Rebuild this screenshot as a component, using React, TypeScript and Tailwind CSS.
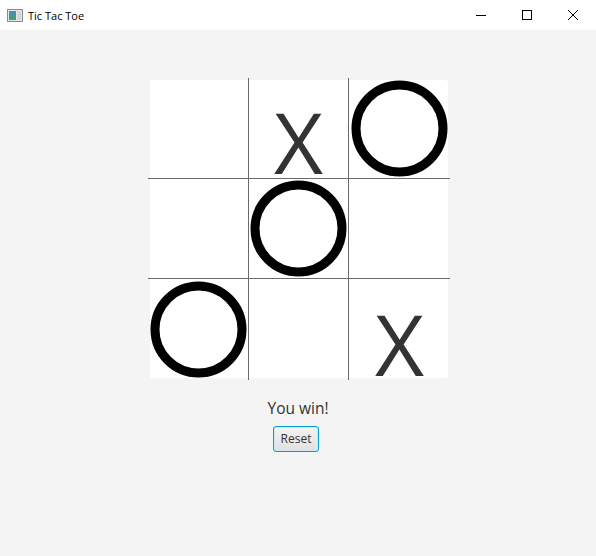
import React from "react";

type Mark = "X" | "O" | "";

const board: Mark[] = ["", "X", "O", "", "O", "", "O", "", "X"];

function Cell({ mark, idx }: { mark: Mark; idx: number }) {
  const col = idx % 3;
  const row = Math.floor(idx / 3);
  const br = col < 2 ? "border-r border-r-[#6a6a6a]" : "";
  const bb = row < 2 ? "border-b border-b-[#6a6a6a]" : "";
  return (
    <div className={`relative flex justify-center overflow-visible ${br} ${bb} ${mark === "X" ? "items-end" : "items-center"}`}>
      {mark === "O" && (
        <svg width="97" height="97" viewBox="0 0 97 97" className="block">
          <circle cx="48.5" cy="48.5" r="43.5" fill="none" stroke="#000" strokeWidth="9" />
        </svg>
      )}
      {mark === "X" && (
        <span
          className="block text-[85px] leading-[74px] text-[#333333]"
          style={{ fontFamily: '"Open Sans", "Noto Sans", sans-serif' }}
        >
          X
        </span>
      )}
    </div>
  );
}

export default function App() {
  return (
    <div className="w-[596px] h-[556px] bg-[#f4f4f4] flex flex-col" style={{ fontFamily: '"Open Sans", "Noto Sans", sans-serif' }}>
      {/* title bar */}
      <div className="h-[30px] bg-white flex items-center shrink-0">
        <div className="ml-[7px] w-[16px] h-[13px] border border-[#8a8a8a] bg-[#e6e6e6] flex p-[1px] gap-[1px]">
          <div className="w-[7px] h-full bg-gradient-to-b from-[#4a8ac4] to-[#3fa35a]" />
          <div className="flex-1 h-full bg-[#d0d8dc]" />
        </div>
        <span className="ml-[5px] text-[11px] text-black leading-none">Tic Tac Toe</span>
        <div className="ml-auto flex items-center h-full">
          <div className="w-[46px] h-full flex items-center justify-center">
            <svg width="10" height="10" viewBox="0 0 10 10">
              <line x1="0" y1="5.5" x2="10" y2="5.5" stroke="#000" strokeWidth="1" />
            </svg>
          </div>
          <div className="w-[46px] h-full flex items-center justify-center">
            <svg width="10" height="10" viewBox="0 0 10 10">
              <rect x="0.5" y="0.5" width="9" height="9" fill="none" stroke="#000" strokeWidth="1" />
            </svg>
          </div>
          <div className="w-[46px] h-full flex items-center justify-center">
            <svg width="10" height="10" viewBox="0 0 10 10">
              <line x1="0" y1="0" x2="10" y2="10" stroke="#000" strokeWidth="1" />
              <line x1="10" y1="0" x2="0" y2="10" stroke="#000" strokeWidth="1" />
            </svg>
          </div>
        </div>
      </div>

      {/* content */}
      <div className="flex flex-col items-center pt-[48px]">
        <div className="relative w-[302px] h-[302px] ml-[2px]">
          <div className="absolute inset-[2px] bg-white rounded-[3px]" />
          <div className="relative grid grid-cols-[101px_100px_101px] grid-rows-[101px_100px_101px] w-full h-full">
            {board.map((m, i) => (
              <Cell key={i} mark={m} idx={i} />
            ))}
          </div>
        </div>
        <div className="mt-[17px] text-[15.5px] leading-[22px] text-[#333333]">You win!</div>
        <button className="mt-[7px] mr-[4px] h-[26px] w-[46px] rounded-[3px] border border-[#039ed3] bg-gradient-to-b from-[#f4f4f4] to-[#e0e0e0] text-[12px] text-[#333333] flex items-center justify-center shadow-[inset_0_0_0_1px_#cfe9f4]">
          Reset
        </button>
      </div>
    </div>
  );
}
